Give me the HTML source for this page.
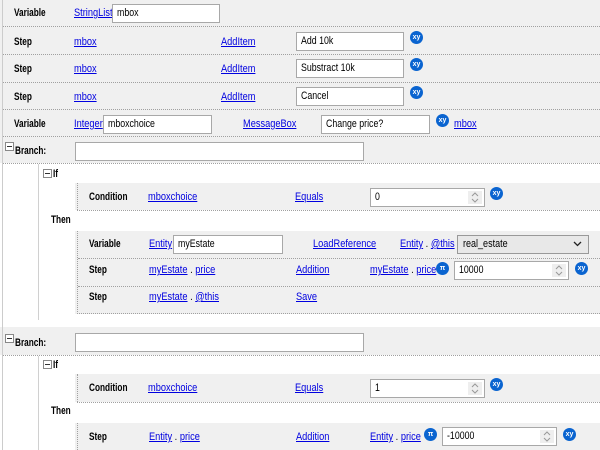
<!DOCTYPE html>
<html><head><meta charset="utf-8"><style>
*{margin:0;padding:0;box-sizing:border-box}
body{width:600px;height:450px;overflow:hidden;background:#fff;font-family:"Liberation Sans",sans-serif;font-size:11px;color:#000;position:relative}
.a{position:absolute;line-height:14px;white-space:nowrap;transform:scaleX(0.84);transform-origin:left center}
.a.b{font-weight:bold;transform:scaleX(0.75)}
.l{color:#0000e0;text-decoration:underline}
.g{position:absolute;background:#f0f0f0}
.hd{position:absolute;height:0;border-top:1px dotted #a0a0a0}
.vd{position:absolute;width:0;border-left:1px dotted #a0a0a0}
.vs{position:absolute;width:1px;background:#d0d0d0}
.in{position:absolute;height:19px;background:#fff;border:1px solid #a8a8a8;padding-left:4px;line-height:17px;white-space:nowrap}
.in span{display:inline-block;transform:scaleX(0.8);transform-origin:left center}
.sp{position:absolute;right:2px;top:2px;width:14px;height:13px;background:#eee}
.xy{position:absolute;width:13px;height:13px;border-radius:50%;background:#0a64d0;color:#fff;font-size:7px;font-weight:bold;line-height:13px;text-align:center}
.mn{position:absolute;width:9px;height:9px;border:1px solid #888;background:#fff}
.mn:after{content:"";position:absolute;left:1px;top:3px;width:5px;height:1px;background:#333}
.sel{position:absolute;height:19px;background:#e8e8e8;border:1px solid #999;padding-left:5px;line-height:17px}
</style></head><body>
<svg width="0" height="0" style="position:absolute"><defs><symbol id="ar" viewBox="0 0 14 13"><path d="M4 5 L7 2 L10 5 M4 8 L7 11 L10 8" fill="none" stroke="#999" stroke-width="1"/></symbol></defs></svg>
<div class="g" style="left:0;top:0;width:600px;height:163px"></div>
<div class="g" style="left:0;top:327px;width:600px;height:28px"></div>
<div class="vs" style="left:2px;top:0;height:450px;background:#ccc"></div>

<div class="a b" style="left:14px;top:6px">Variable</div>
<div class="a l" style="left:74px;top:6px">StringList</div>
<div class="in" style="left:112px;top:4px;width:108px"><span>mbox</span></div>
<div class="hd" style="left:3px;top:26px;width:597px"></div>

<div class="a b" style="left:14px;top:35px">Step</div>
<div class="a l" style="left:74px;top:35px">mbox</div>
<div class="a l" style="left:221px;top:35px">AddItem</div>
<div class="in" style="left:296px;top:32px;width:108px"><span>Add 10k</span></div>
<div class="xy" style="left:410px;top:31px">xy</div>
<div class="hd" style="left:3px;top:54px;width:597px"></div>

<div class="a b" style="left:14px;top:62px">Step</div>
<div class="a l" style="left:74px;top:62px">mbox</div>
<div class="a l" style="left:221px;top:62px">AddItem</div>
<div class="in" style="left:296px;top:59px;width:108px"><span>Substract 10k</span></div>
<div class="xy" style="left:410px;top:58px">xy</div>
<div class="hd" style="left:3px;top:82px;width:597px"></div>

<div class="a b" style="left:14px;top:90px">Step</div>
<div class="a l" style="left:74px;top:90px">mbox</div>
<div class="a l" style="left:221px;top:90px">AddItem</div>
<div class="in" style="left:296px;top:87px;width:108px"><span>Cancel</span></div>
<div class="xy" style="left:410px;top:86px">xy</div>
<div class="hd" style="left:3px;top:109px;width:597px"></div>

<div class="a b" style="left:14px;top:117px">Variable</div>
<div class="a l" style="left:74px;top:117px">Integer</div>
<div class="in" style="left:103px;top:115px;width:109px"><span>mboxchoice</span></div>
<div class="a l" style="left:243px;top:117px">MessageBox</div>
<div class="in" style="left:321px;top:115px;width:109px"><span>Change price?</span></div>
<div class="xy" style="left:436px;top:114px">xy</div>
<div class="a l" style="left:454px;top:117px">mbox</div>
<div class="hd" style="left:3px;top:136px;width:597px"></div>

<div class="mn" style="left:5px;top:142px"></div>
<div class="a b" style="left:15px;top:144px">Branch:</div>
<div class="in" style="left:75px;top:142px;width:289px"></div>
<div class="hd" style="left:3px;top:163px;width:597px"></div>

<div class="vs" style="left:38px;top:164px;height:156px"></div>
<div class="mn" style="left:43px;top:169px"></div>
<div class="a b" style="left:53px;top:167px">If</div>
<div class="g" style="left:75px;top:183px;width:525px;height:27px"></div>
<div class="vd" style="left:77px;top:183px;height:27px"></div>
<div class="hd" style="left:77px;top:210px;width:523px"></div>
<div class="a b" style="left:89px;top:190px">Condition</div>
<div class="a l" style="left:148px;top:190px">mboxchoice</div>
<div class="a l" style="left:295px;top:190px">Equals</div>
<div class="in" style="left:370px;top:188px;width:115px"><span>0</span><svg class="sp"><use href="#ar"/></svg></div>
<div class="xy" style="left:490px;top:187px">xy</div>

<div class="a b" style="left:51px;top:213px">Then</div>
<div class="g" style="left:75px;top:231px;width:525px;height:83px"></div>
<div class="vd" style="left:77px;top:231px;height:83px"></div>
<div class="a b" style="left:89px;top:237px">Variable</div>
<div class="a l" style="left:149px;top:237px">Entity</div>
<div class="in" style="left:173px;top:235px;width:110px"><span>myEstate</span></div>
<div class="a l" style="left:313px;top:237px">LoadReference</div>
<div class="a" style="left:400px;top:237px"><span class="l">Entity</span> . <span class="l">@this</span></div>
<div class="sel" style="left:457px;top:235px;width:132px"><span style="display:inline-block;transform:scaleX(0.82);transform-origin:left">real_estate</span><svg style="position:absolute;right:6px;top:5px" width="9" height="6"><path d="M1 1 L4.5 4.5 L8 1" fill="none" stroke="#222" stroke-width="1.3"/></svg></div>
<div class="hd" style="left:78px;top:258px;width:522px"></div>
<div class="a b" style="left:89px;top:263px">Step</div>
<div class="a" style="left:149px;top:263px"><span class="l">myEstate</span> . <span class="l">price</span></div>
<div class="a l" style="left:296px;top:263px">Addition</div>
<div class="a" style="left:370px;top:263px"><span class="l">myEstate</span> . <span class="l">price</span></div>
<div class="xy" style="left:436px;top:262px">π</div>
<div class="in" style="left:454px;top:261px;width:115px"><span>10000</span><svg class="sp"><use href="#ar"/></svg></div>
<div class="xy" style="left:575px;top:262px">xy</div>
<div class="hd" style="left:78px;top:286px;width:522px"></div>
<div class="a b" style="left:89px;top:290px">Step</div>
<div class="a" style="left:149px;top:290px"><span class="l">myEstate</span> . <span class="l">@this</span></div>
<div class="a l" style="left:296px;top:290px">Save</div>
<div class="hd" style="left:77px;top:313px;width:523px"></div>

<div class="mn" style="left:5px;top:334px"></div>
<div class="a b" style="left:15px;top:336px">Branch:</div>
<div class="in" style="left:75px;top:333px;width:289px"></div>
<div class="hd" style="left:3px;top:355px;width:597px"></div>
<div class="vs" style="left:38px;top:356px;height:94px"></div>
<div class="mn" style="left:43px;top:360px"></div>
<div class="a b" style="left:53px;top:358px">If</div>
<div class="g" style="left:75px;top:374px;width:525px;height:28px"></div>
<div class="vd" style="left:77px;top:374px;height:28px"></div>
<div class="hd" style="left:77px;top:402px;width:523px"></div>
<div class="a b" style="left:89px;top:381px">Condition</div>
<div class="a l" style="left:148px;top:381px">mboxchoice</div>
<div class="a l" style="left:295px;top:381px">Equals</div>
<div class="in" style="left:370px;top:379px;width:115px"><span>1</span><svg class="sp"><use href="#ar"/></svg></div>
<div class="xy" style="left:490px;top:378px">xy</div>
<div class="a b" style="left:51px;top:404px">Then</div>
<div class="g" style="left:75px;top:423px;width:525px;height:27px"></div>
<div class="vd" style="left:77px;top:423px;height:27px"></div>
<div class="a b" style="left:89px;top:430px">Step</div>
<div class="a" style="left:149px;top:430px"><span class="l">Entity</span> . <span class="l">price</span></div>
<div class="a l" style="left:296px;top:430px">Addition</div>
<div class="a" style="left:370px;top:430px"><span class="l">Entity</span> . <span class="l">price</span></div>
<div class="xy" style="left:424px;top:428px">π</div>
<div class="in" style="left:442px;top:427px;width:115px"><span>-10000</span><svg class="sp"><use href="#ar"/></svg></div>
<div class="xy" style="left:563px;top:428px">xy</div>
</body></html>
